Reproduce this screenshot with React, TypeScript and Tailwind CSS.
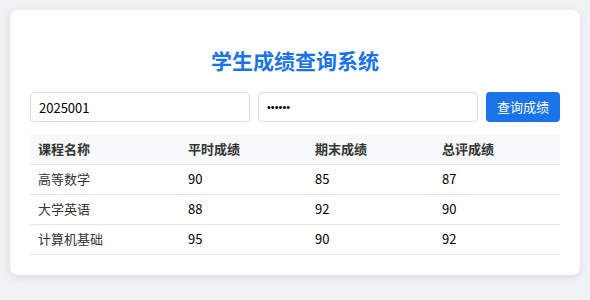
const ROWS = [
  { name: "高等数学", usual: 90, final: 85, total: 87 },
  { name: "大学英语", usual: 88, final: 92, total: 90 },
  { name: "计算机基础", usual: 95, final: 90, total: 92 },
];

export default function App() {
  return (
    <div
      className="min-h-[300px] w-[590px] bg-[#f0f2f5] p-[10px] text-[#333]"
      style={{ fontFamily: '"Noto Sans CJK SC", "Noto Sans", sans-serif' }}
    >
      <div className="rounded-lg bg-white px-5 pb-5 pt-[34px] shadow-[0_2px_8px_rgba(0,0,0,0.1)]">
        <h2 className="text-center text-[21px] font-bold leading-[32px] text-[#1a73e8]">
          学生成绩查询系统
        </h2>

        <div className="mt-4 flex gap-2">
          <input
            defaultValue="2025001"
            className="h-[30px] w-[220px] rounded border border-[#ddd] px-2 text-[13px] text-black outline-none"
          />
          <input
            type="password"
            defaultValue="123456"
            className="h-[30px] w-[220px] rounded border border-[#ddd] px-2 font-['Liberation_Sans',sans-serif] text-[11px] text-black outline-none"
          />
          <button className="h-[30px] flex-1 rounded bg-[#1a73e8] text-[13px] text-white">
            查询成绩
          </button>
        </div>

        <table className="mt-[12px] w-full border-collapse text-[13px]">
          <thead>
            <tr className="border-b border-[#e5e5e5] bg-[#f8f9fa]">
              <th className="h-[30px] w-[150px] px-2 text-left font-bold">课程名称</th>
              <th className="w-[127px] px-2 text-left font-bold">平时成绩</th>
              <th className="w-[127px] px-2 text-left font-bold">期末成绩</th>
              <th className="px-2 text-left font-bold">总评成绩</th>
            </tr>
          </thead>
          <tbody>
            {ROWS.map((r) => (
              <tr key={r.name} className="border-b border-[#e5e5e5]">
                <td className="h-[30px] px-2">{r.name}</td>
                <td className="px-2 text-black">{r.usual}</td>
                <td className="px-2 text-black">{r.final}</td>
                <td className="px-2 text-black">{r.total}</td>
              </tr>
            ))}
          </tbody>
        </table>
      </div>
    </div>
  );
}
